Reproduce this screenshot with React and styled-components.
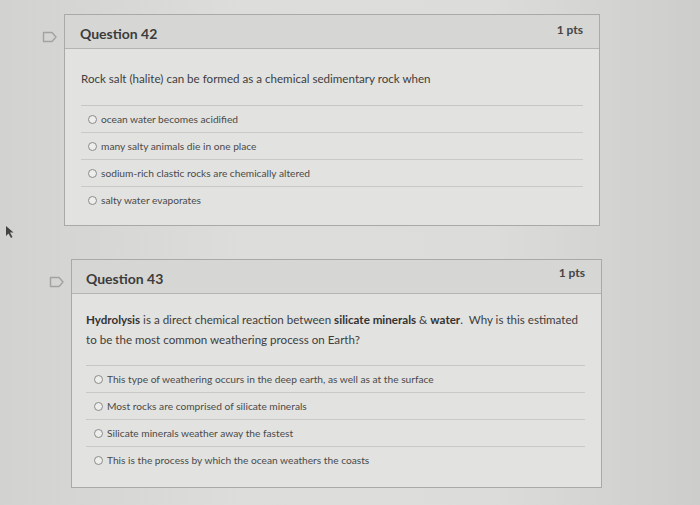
import React from 'react';
import styled, { createGlobalStyle } from 'styled-components';

const GlobalStyle = createGlobalStyle`
  html, body {
    margin: 0;
    padding: 0;
  }
  body {
    width: 700px;
    height: 505px;
    overflow: hidden;
    font-family: Lato, "Open Sans", "Liberation Sans", sans-serif;
    background: linear-gradient(90deg, #d2d2d0 0%, #dddddb 35%, #dcdcda 70%, #cdcdcb 100%);
  }
`;

const Page = styled.div`
  position: relative;
  display: flex;
  flex-direction: column;
  gap: 33px;
  padding-top: 14px;
  height: 505px;
  box-sizing: border-box;
`;

const Row = styled.div`
  display: flex;
  align-items: flex-start;
  margin-left: ${p => p.$left}px;
`;

const FlagBox = styled.div`
  width: 22px;
  flex: none;
  padding-top: 13px;
`;

const Card = styled.div`
  width: ${p => p.$width}px;
  border: 1px solid #a9a9a7;
  background: #e2e2e0;
`;

const Header = styled.div`
  height: 33px;
  display: flex;
  align-items: center;
  justify-content: space-between;
  padding: 0 16px 0 ${p => p.$pad}px;
  background: #d6d6d4;
  border-bottom: 1px solid #b4b4b2;
  color: #3c3c3c;
`;

const Title = styled.div`
  font-size: 14px;
  font-weight: 700;
  margin-top: 4px;
`;

const Points = styled.div`
  font-size: 12px;
  font-weight: 700;
  color: #454545;
  margin-top: ${p => p.$up ? -8 : -4}px;
`;

const Body = styled.div`
  padding: ${p => p.$top}px 16px ${p => p.$bottom}px ${p => p.$pad}px;
`;

const Question = styled.div`
  font-size: 11.6px;
  line-height: 20px;
  color: #3e3e3e;
  padding-bottom: ${p => p.$gap}px;
  border-bottom: 1px solid #c6c6c4;

  b {
    font-weight: 700;
    color: #333;
  }
`;

const Option = styled.div`
  height: 26px;
  display: flex;
  align-items: center;
  gap: 4px;
  padding-left: ${p => p.$indent}px;
  font-size: 10.2px;
  color: #4a4a4a;
  border-bottom: 1px solid ${p => p.$last ? 'transparent' : '#c9c9c7'};
`;

const Radio = styled.span`
  width: 7px;
  height: 7px;
  border-radius: 50%;
  border: 1px solid #8a8a8a;
  background: #eeeeec;
  flex: none;
`;

const Cursor = styled.svg`
  position: absolute;
  left: 5px;
  top: 225px;
`;

const Flag = () => (
  <svg width="16" height="12" viewBox="0 0 16 12">
    <path d="M1.5 1.5 H10 L14 6 L10 10.5 H1.5 Z" fill="none" stroke="#a2a2a2" strokeWidth="1.4" strokeLinejoin="round" />
  </svg>
);

const questions = [
  {
    num: 42,
    left: 42,
    width: 534,
    pad: 15,
    bodyPad: 16,
    indent: 7,
    top: 20,
    gap: 16,
    bottom: 11,
    text: <>Rock salt (halite) can be formed as a chemical sedimentary rock when</>,
    options: [
      'ocean water becomes acidified',
      'many salty animals die in one place',
      'sodium-rich clastic rocks are chemically altered',
      'salty water evaporates',
    ],
  },
  {
    num: 43,
    left: 49,
    width: 529,
    pad: 14,
    bodyPad: 14,
    indent: 8,
    top: 16,
    gap: 15,
    bottom: 13,
    up: true,
    text: (
      <>
        <b>Hydrolysis</b> is a direct chemical reaction between <b>silicate minerals</b> &amp; <b>water</b>.&nbsp; Why is this estimated to be the most common weathering process on Earth?
      </>
    ),
    options: [
      'This type of weathering occurs in the deep earth, as well as at the surface',
      'Most rocks are comprised of silicate minerals',
      'Silicate minerals weather away the fastest',
      'This is the process by which the ocean weathers the coasts',
    ],
  },
];

export default function App() {
  return (
    <>
      <GlobalStyle />
      <Page>
        {questions.map(q => (
          <Row key={q.num} $left={q.left}>
            <FlagBox>
              <Flag />
            </FlagBox>
            <Card $width={q.width}>
              <Header $pad={q.pad}>
                <Title>Question {q.num}</Title>
                <Points $up={q.up}>1 pts</Points>
              </Header>
              <Body $top={q.top} $bottom={q.bottom} $pad={q.bodyPad}>
                <Question $gap={q.gap}>{q.text}</Question>
                {q.options.map((o, i) => (
                  <Option key={o} $indent={q.indent} $last={i === q.options.length - 1}>
                    <Radio />
                    {o}
                  </Option>
                ))}
              </Body>
            </Card>
          </Row>
        ))}
        <Cursor width="10" height="14" viewBox="0 0 10 14">
          <path d="M1 1 L1 11 L3.5 8.5 L6 13 L7.5 12 L5 7.5 L8.5 7.5 Z" fill="#2a2a2a" opacity="0.85" />
        </Cursor>
      </Page>
    </>
  );
}
